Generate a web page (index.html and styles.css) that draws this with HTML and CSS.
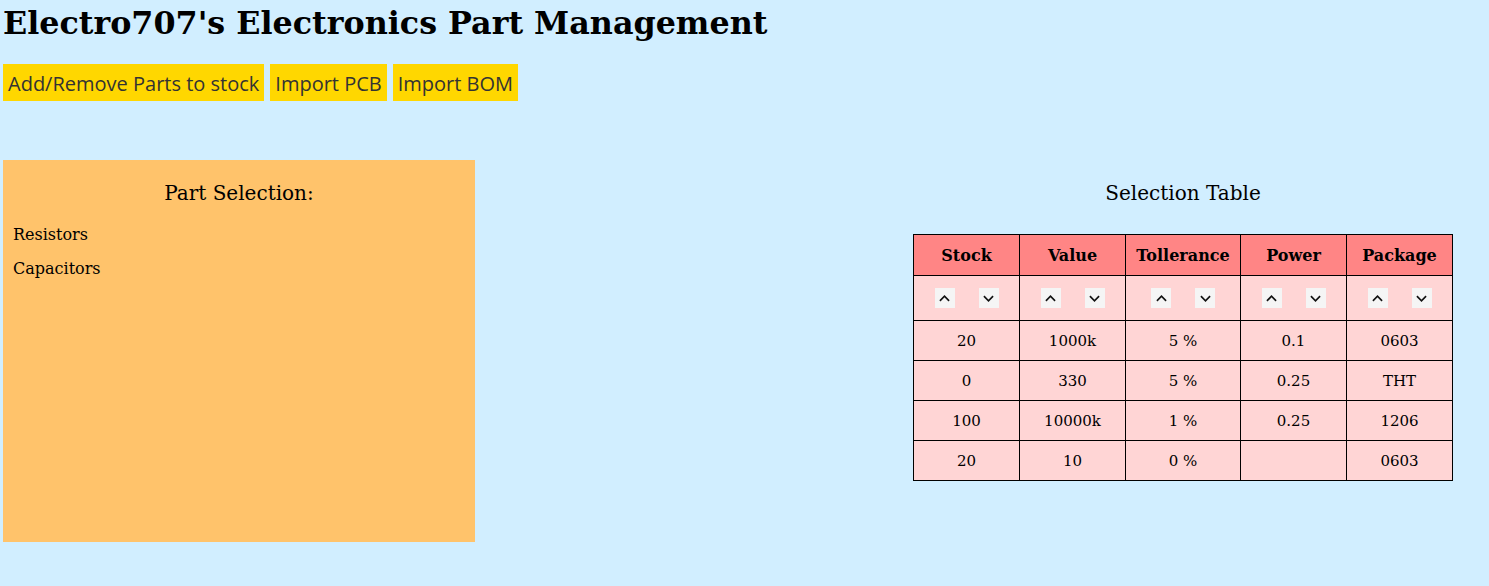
FILE: index.html
```html
<!DOCTYPE html>
<html lang="en">
<head>
  <meta charset="UTF-8">
  <title>Electro707's Electronics Part Management</title>
  <link rel="stylesheet" href="styles.css">
</head>
<body>

  <h1>Electro707's Electronics Part Management</h1>

  <!-- Top actions -->
  <div class="actions">
    <button class="action-btn">Add/Remove Parts to stock</button>
    <button class="action-btn">Import PCB</button>
    <button class="action-btn">Import BOM</button>
  </div>

  <div class="main">
    <!-- Part type list -->
    <div class="part-select">
      <h3>Part Selection:</h3>
      <p class="part-type">Resistors</p>
      <p class="part-type">Capacitors</p>
    </div>

    <!-- Table of parts -->
    <div class="selection">
      <h3>Selection Table</h3>
      <table class="sel-table">
        <tr>
          <th>Stock</th>
          <th>Value</th>
          <th>Tollerance</th>
          <th>Power</th>
          <th>Package</th>
        </tr>
        <tr class="sort-row">
          <td><button class="sort-btn"><svg viewBox="0 0 12 7"><polyline points="1,6 6,1 11,6"/></svg></button><button class="sort-btn"><svg viewBox="0 0 12 7"><polyline points="1,1 6,6 11,1"/></svg></button></td>
          <td><button class="sort-btn"><svg viewBox="0 0 12 7"><polyline points="1,6 6,1 11,6"/></svg></button><button class="sort-btn"><svg viewBox="0 0 12 7"><polyline points="1,1 6,6 11,1"/></svg></button></td>
          <td><button class="sort-btn"><svg viewBox="0 0 12 7"><polyline points="1,6 6,1 11,6"/></svg></button><button class="sort-btn"><svg viewBox="0 0 12 7"><polyline points="1,1 6,6 11,1"/></svg></button></td>
          <td><button class="sort-btn"><svg viewBox="0 0 12 7"><polyline points="1,6 6,1 11,6"/></svg></button><button class="sort-btn"><svg viewBox="0 0 12 7"><polyline points="1,1 6,6 11,1"/></svg></button></td>
          <td><button class="sort-btn"><svg viewBox="0 0 12 7"><polyline points="1,6 6,1 11,6"/></svg></button><button class="sort-btn"><svg viewBox="0 0 12 7"><polyline points="1,1 6,6 11,1"/></svg></button></td>
        </tr>
        <tr><td>20</td><td>1000k</td><td>5 %</td><td>0.1</td><td>0603</td></tr>
        <tr><td>0</td><td>330</td><td>5 %</td><td>0.25</td><td>THT</td></tr>
        <tr><td>100</td><td>10000k</td><td>1 %</td><td>0.25</td><td>1206</td></tr>
        <tr><td>20</td><td>10</td><td>0 %</td><td></td><td>0603</td></tr>
      </table>
    </div>
  </div>

</body>
</html>
```

FILE: styles.css
```css
body {
  font-family: "DejaVu Serif", serif;
  background-color: #d1eeff;
  margin: 0;
  padding: 3px 0 0 3px;
  color: #000;
}

h1 {
  font-size: 31.75px;
  margin: 0;
  line-height: 40px;
}

.actions {
  display: flex;
  gap: 6px;
  margin-top: 21px;
}

.action-btn {
  font-family: "Open Sans", sans-serif;
  font-size: 20px;
  color: #333;
  background-color: #ffd700;
  border: none;
  padding: 2px 5px 0;
  height: 37px;
}

.main {
  display: flex;
  margin-top: 59px;
}

.part-select {
  width: 472px;
  height: 382px;
  background-color: #ffc36b;
}

h3 {
  font-size: 20px;
  font-weight: normal;
  text-align: center;
  margin: 21px 0 0;
}

.part-type {
  font-size: 16px;
  margin: 20px 0 0 10px;
}

.part-type + .part-type {
  margin-top: 15px;
}

.selection {
  width: 612px;
  margin-left: auto;
  display: flex;
  flex-direction: column;
  align-items: center;
}

.sel-table {
  border-collapse: collapse;
  margin-top: 29px;
  font-size: 15px;
}

.sel-table th,
.sel-table td {
  border: 1px solid #000;
  text-align: center;
  height: 39px;
  padding: 0;
  width: 105px;
  background-color: #ffd5d5;
}

.sel-table th {
  background-color: #ff8585;
  font-size: 16px;
  height: 40px;
}

.sel-table th:nth-child(3) {
  width: 114px;
}

.sort-row td {
  height: 44px;
}

.sort-btn {
  width: 20px;
  height: 20px;
  padding: 0;
  border: none;
  background-color: #f5f5f5;
  margin: 0 12px;
  vertical-align: middle;
  display: inline-flex;
  align-items: center;
  justify-content: center;
}

.sort-btn svg {
  width: 11px;
  height: 7px;
  fill: none;
  stroke: #111;
  stroke-width: 1.8;
}
```
